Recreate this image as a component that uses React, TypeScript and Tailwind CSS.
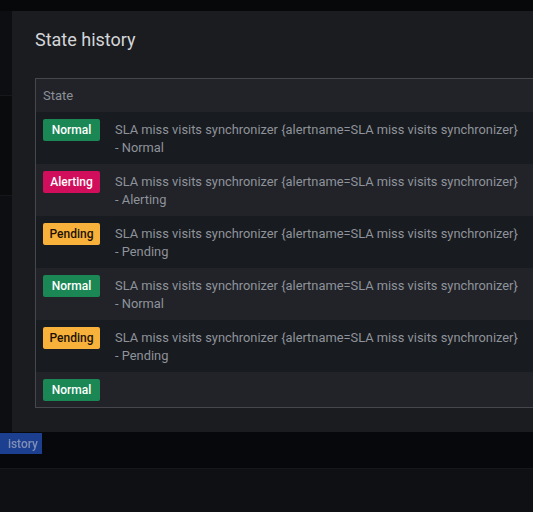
const rows = [
  { state: 'Normal', text: 'Normal' },
  { state: 'Alerting', text: 'Alerting' },
  { state: 'Pending', text: 'Pending' },
  { state: 'Normal', text: 'Normal' },
  { state: 'Pending', text: 'Pending' },
]

const badgeClass: Record<string, string> = {
  Normal: 'bg-[#1a8754] text-white',
  Alerting: 'bg-[#d10e5c] text-white',
  Pending: 'bg-[#f8b13a] text-[#1c1204]',
}

function Badge({ state }: { state: string }) {
  return (
    <div
      className={`w-[57px] h-[22px] shrink-0 flex items-center justify-center rounded-[2px] text-[12px] font-medium ${badgeClass[state]}`}
    >
      {state}
    </div>
  )
}

export default function App() {
  return (
    <div
      className="relative w-[533px] h-[512px] overflow-hidden bg-[#0c0d10]"
      style={{ fontFamily: 'Roboto, "Liberation Sans", sans-serif' }}
    >
      {/* page behind the overlay */}
      <div className="flex flex-col h-full">
        <div className="h-[11px] bg-[#07080a]" />
        <div className="h-[421px] flex flex-col bg-[#0d0e11]">
          <div className="h-[85px] border-b border-[#17181b]" />
          <div className="h-[100px] bg-[#0a0b0d] border-b border-[#16171a]" />
          <div className="flex-1" />
        </div>
        <div className="h-[36px] bg-[#07080b] flex items-start">
          <div className="w-[42px] h-[21px] mt-px bg-[#1d3f8f] text-[#7f8fb8] text-[12px] font-medium flex items-center justify-end pr-[4px] blur-[0.6px]">
            istory
          </div>
        </div>
        <div className="flex-1 bg-[#0f1013] border-t border-[#16171a]" />
      </div>

      {/* modal */}
      <div className="absolute left-[12px] top-[11px] w-[560px] h-[421px] bg-[#1a1c20] pl-[23px]">
        <div className="pt-[17px] h-[67px] text-[18px] leading-[24px] text-[#d4d5d9]">State history</div>
        <div className="border border-[#45474d] border-r-0">
          <div className="h-[33px] bg-[#212329] flex items-center pl-[7px] text-[13px] text-[#8e9098]">State</div>
          {rows.map((r, i) => (
            <div
              key={i}
              className={`h-[52px] flex items-start gap-[15px] pl-[7px] pt-[7px] ${
                i % 2 === 0 ? 'bg-[#181b1f]' : 'bg-[#212329]'
              }`}
            >
              <Badge state={r.state} />
              <div className="text-[12.85px] leading-[18px] text-[#8f939b] pt-[2px] whitespace-nowrap">
                <div>SLA miss visits synchronizer {'{'}alertname=SLA miss visits synchronizer{'}'}</div>
                <div>- {r.text}</div>
              </div>
            </div>
          ))}
          <div className="h-[35px] bg-[#212329] flex items-start pl-[7px] pt-[7px]">
            <Badge state="Normal" />
          </div>
        </div>
      </div>
    </div>
  )
}
